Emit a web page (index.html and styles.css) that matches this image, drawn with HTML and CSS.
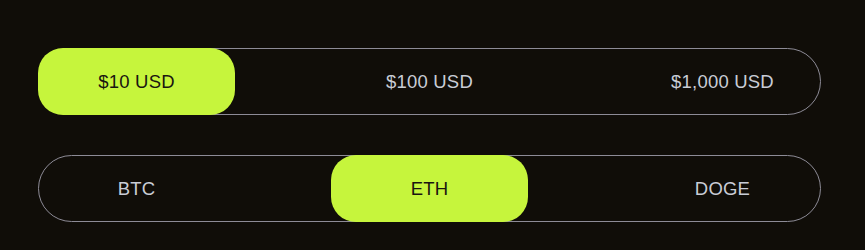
FILE: index.html
```html
<!DOCTYPE html>
<html>
<head>
<meta charset="utf-8">
<link rel="stylesheet" href="styles.css">
</head>
<body>
<div class="page">
  <div class="seg">
    <div class="opt active">$10 USD</div>
    <div class="opt">$100 USD</div>
    <div class="opt">$1,000 USD</div>
  </div>
  <div class="seg">
    <div class="opt">BTC</div>
    <div class="opt active">ETH</div>
    <div class="opt">DOGE</div>
  </div>
</div>
</body>
</html>
```
FILE: styles.css
```css
html, body {
  margin: 0;
  padding: 0;
  background: #100d08;
}
.page {
  padding: 48px 44px 0 38px;
  display: flex;
  flex-direction: column;
  gap: 40px;
  font-family: "Liberation Sans", Arial, sans-serif;
}
.seg {
  width: 781px;
  height: 65px;
  border: 1px solid #8d8b96;
  border-radius: 34px;
  display: flex;
  justify-content: space-between;
  align-items: stretch;
  box-sizing: content-box;
}
.opt {
  width: 197px;
  display: flex;
  align-items: center;
  justify-content: center;
  font-size: 18.5px;
  letter-spacing: 0.2px;
  color: #c9ccd6;
  border-radius: 25px;
  margin: -1px;
}
.opt.active {
  background: #c6f53c;
  color: #1a1510;
}
```
